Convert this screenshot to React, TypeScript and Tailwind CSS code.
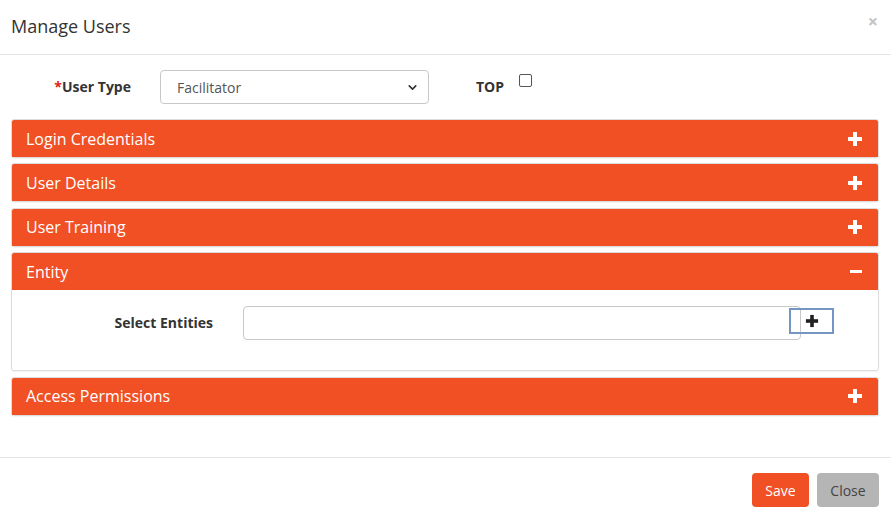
import { ChevronDown } from "lucide-react";

const ORANGE = "bg-[#f05023]";

type PanelProps = { title: string; open?: boolean; children?: React.ReactNode };

const PlusIcon = ({ className }: { className: string }) => (
    <svg width="14" height="14" viewBox="0 0 14 14" className={className}>
        <rect x="5" y="0" width="4" height="14" fill="currentColor" />
        <rect x="0" y="5" width="14" height="4" fill="currentColor" />
    </svg>
);

const MinusIcon = () => (
    <svg width="12" height="14" viewBox="0 0 12 14" className="text-white">
        <rect x="0" y="5" width="12" height="3" fill="currentColor" />
    </svg>
);

const Panel = ({ title, open, children }: PanelProps) => (
    <div className="mb-[5.4px] rounded-[3px] border border-[#dcdcdc] shadow-[0_1px_1px_rgba(0,0,0,0.05)]">
        <div className={`${ORANGE} flex h-[37px] items-center justify-between rounded-t-[2px] pl-[14px] pr-[16px]`}>
            <span className="text-[16px] text-white">{title}</span>
            {open ? <MinusIcon /> : <PlusIcon className="text-white" />}
        </div>
        {open && children}
    </div>
);

const App = () => {
    return (
        <div className="h-[518px] w-[891px] bg-white text-[#333] font-['Open_Sans',sans-serif]">
            {/* Header */}
            <div className="flex h-[55px] items-center justify-between border-b border-[#e5e5e5] pl-[11px] pr-[13px]">
                <h4 className="-mt-[3px] text-[18px] leading-none text-[#333]">Manage Users</h4>
                <span className="-mt-[12px] text-[18px] font-bold leading-none text-[#c4c4c4]">×</span>
            </div>

            {/* Body */}
            <div className="h-[402px] pl-[11px] pr-[12px] pt-[15px]">
                <div className="flex items-start">
                    <label className="mt-[6px] flex w-[120px] justify-end text-[14px] font-bold">
                        <span className="text-[#e02020]">*</span>User Type
                    </label>
                    <div className="relative ml-[29px] h-[34px] w-[269px] rounded-[4px] border border-[#c8c8c8] bg-white">
                        <span className="absolute left-[16px] top-[6px] text-[14px] text-[#555]">Facilitator</span>
                        <ChevronDown size={13} strokeWidth={3} className="absolute right-[9px] top-[10px] text-[#333]" />
                    </div>
                    <label className="ml-[47px] mt-[6px] text-[14px] font-bold">TOP</label>
                    <span className="ml-[15px] mt-[4px] h-[13px] w-[13px] rounded-[2px] border border-[#555] bg-white" />
                </div>

                <div className="mt-[15px]">
                    <Panel title="Login Credentials" />
                    <Panel title="User Details" />
                    <Panel title="User Training" />
                    <Panel title="Entity" open>
                        <div className="flex h-[80px] items-start pt-[16px]">
                            <label className="mt-[6px] w-[201px] text-right text-[14px] font-bold">Select Entities</label>
                            <div className="ml-[30px] h-[34px] w-[558px] rounded-[4px] border border-[#c8c8c8]" />
                            <button className="ml-[-12px] mt-[2px] flex h-[26px] w-[45px] items-center justify-center border-2 border-[#7496c2] bg-transparent">
                                <PlusIcon className="text-[#222] scale-90" />
                            </button>
                        </div>
                    </Panel>
                    <Panel title="Access Permissions" />
                </div>
            </div>

            {/* Footer */}
            <div className="flex justify-end gap-[8px] border-t border-[#e5e5e5] pr-[12px] pt-[15px]">
                <button className={`${ORANGE} h-[34px] w-[57px] rounded-[4px] text-[14px] text-white`}>Save</button>
                <button className="h-[34px] w-[62px] rounded-[4px] bg-[#b5b5b5] text-[14px] text-[#444]">Close</button>
            </div>
        </div>
    );
};

export default App;
